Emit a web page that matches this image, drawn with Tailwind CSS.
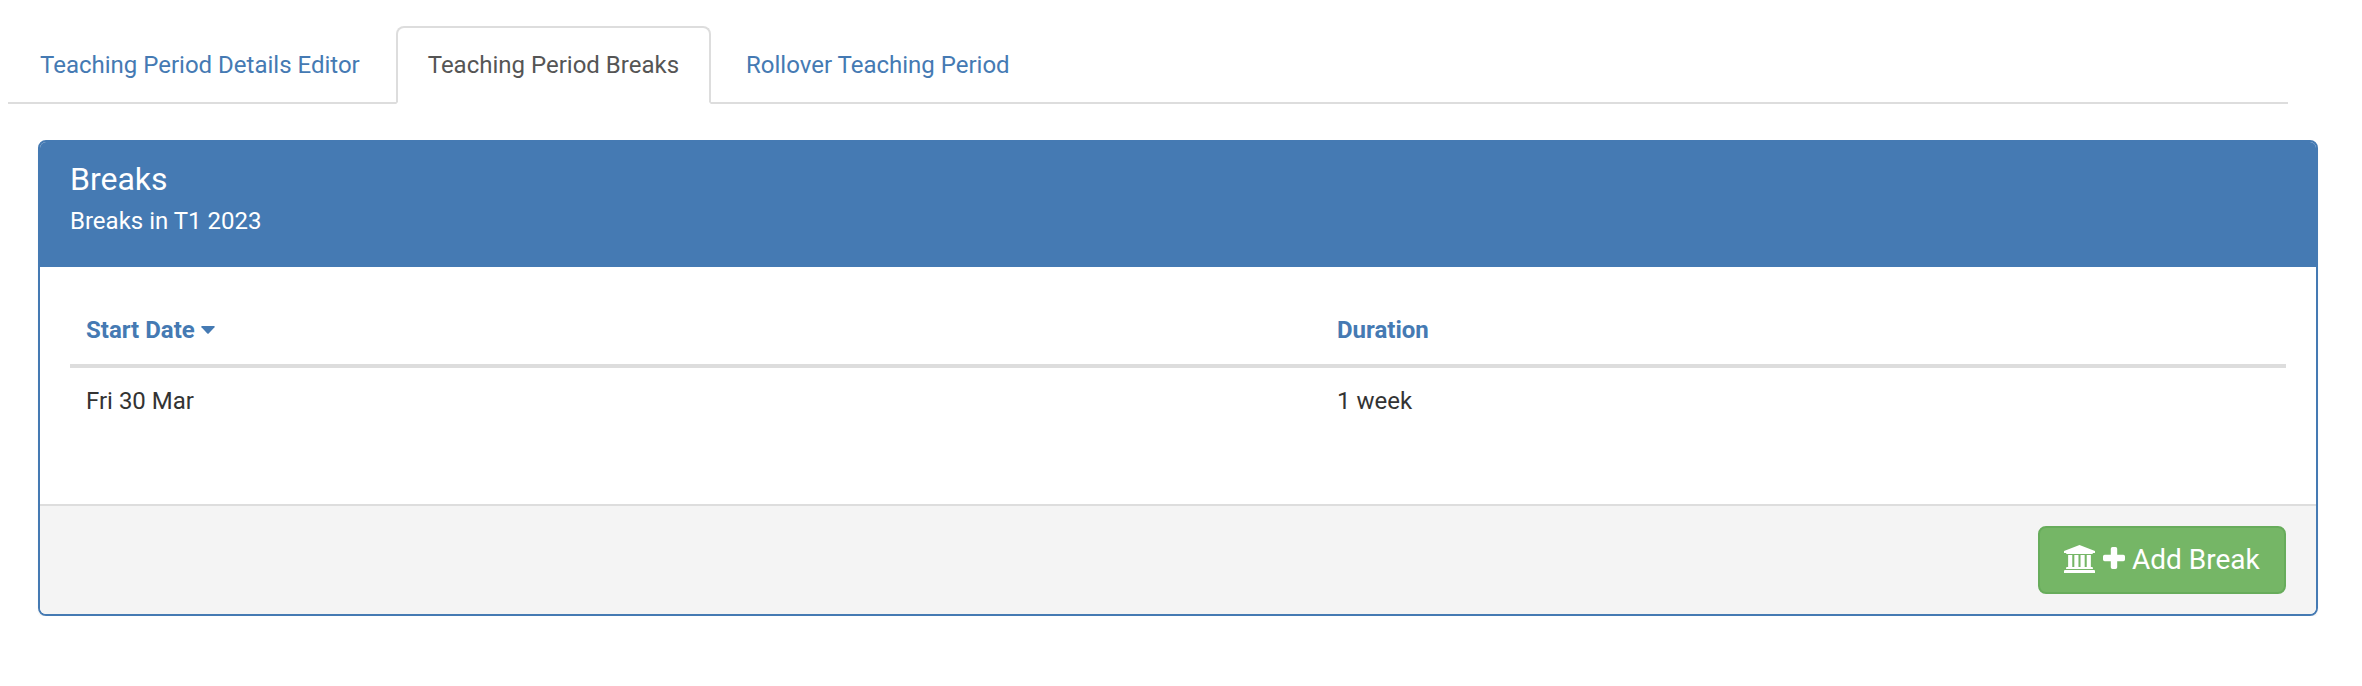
<!DOCTYPE html>
<html lang="en">
<head>
<meta charset="utf-8">
<title>Teaching Period Breaks</title>
<script src="https://cdn.jsdelivr.net/npm/@tailwindcss/browser@4"></script>
</head>
<body class="bg-white font-['Roboto',sans-serif] text-[24px] leading-[34px] text-[#333]">
  <nav class="ml-2 mt-[26px] flex h-[78px] w-[2280px] gap-1 border-b-2 border-[#ddd]">
    <a class="h-[78px] border-2 border-transparent px-[30px] pt-[20px] whitespace-nowrap text-[#457ab3]">Teaching Period Details Editor</a>
    <a class="h-[78px] rounded-t-lg border-2 border-[#ddd] border-b-white bg-white px-[30px] pt-[20px] whitespace-nowrap text-[#555]">Teaching Period Breaks</a>
    <a class="h-[78px] border-2 border-transparent px-[29px] pt-[20px] whitespace-nowrap text-[#457ab3]">Rollover Teaching Period</a>
  </nav>
  <section class="mt-9 ml-[38px] flex h-[476px] w-[2280px] flex-col overflow-hidden rounded-lg border-2 border-[#457ab3] bg-white shadow-[0_2px_2px_rgba(0,0,0,0.05)]">
    <header class="h-[125px] bg-[#457ab3] px-[30px] pt-[20px] text-white">
      <h3 class="text-[32px] leading-[35px]">Breaks</h3>
      <p class="mt-[7px] leading-[34px]">Breaks in T1 2023</p>
    </header>
    <div class="grow px-[30px] pt-[30px]">
      <div class="grid h-[71px] grid-cols-[1251px_1fr] border-b-4 border-[#ddd] pt-[16px] font-bold text-[#457ab3]">
        <div class="flex items-center self-start px-4">Start Date<svg class="ml-[6px] h-[8px] w-[14px]" viewBox="0 0 14 8" fill="currentColor"><path d="M1 0h12q1.200.2.500 1.300L7.700 7.500q-.7.600-1.400 0L.500 1.300Q-.200.200 1 0z"/></svg></div>
        <div class="px-4">Duration</div>
      </div>
      <div class="grid grid-cols-[1251px_1fr] pt-[16px]">
        <div class="px-4">Fri 30 Mar</div>
        <div class="px-4">1 week</div>
      </div>
    </div>
    <footer class="flex h-[110px] justify-end border-t-2 border-[#ddd] bg-[#f4f4f4] px-[30px] pt-5">
      <button class="flex h-[68px] w-[248px] items-center rounded-lg border-2 border-[#67ac5b] bg-[#75b666] pl-6 text-[28px] leading-[38px] whitespace-nowrap text-white">
        <svg class="mb-[2px] h-[28px] w-[31px] shrink-0" viewBox="0 0 1920 1792" preserveAspectRatio="none" fill="currentColor"><path d="M960 0l960 384v128h-128q0 26-20.500 45t-48.500 19H197q-28 0-48.500-19T128 512H0V384zM256 640h256v768h128V640h256v768h128V640h256v768h128V640h256v768h59q28 0 48.500 19t20.500 45v64H128v-64q0-26 20.500-45t48.500-19h59V640zm1595 960q28 0 48.500 19t20.500 45v128H0v-128q0-26 20.500-45t48.500-19h1782z"/></svg>
        <svg class="mb-1 ml-2 h-[22px] w-[22px] shrink-0" viewBox="0 0 22 22" fill="currentColor"><path d="M9.500 0h3q1.700 0 1.700 1.700v6.100h6.100q1.700 0 1.700 1.700v3q0 1.700-1.700 1.700h-6.100v6.100q0 1.700-1.700 1.700h-3q-1.700 0-1.700-1.700v-6.100H1.700Q0 14.200 0 12.500v-3q0-1.700 1.700-1.700h6.100V1.700Q7.800 0 9.500 0z"/></svg>
        <span class="ml-[7px]">Add Break</span>
      </button>
    </footer>
  </section>
</body>
</html>
